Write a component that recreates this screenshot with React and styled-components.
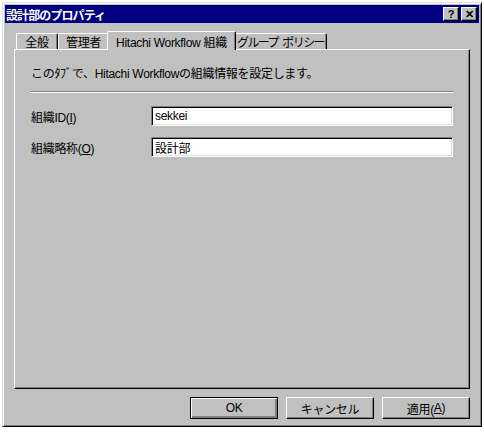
import React from 'react';
import styled, {createGlobalStyle} from 'styled-components';

const GlobalStyle = createGlobalStyle`
  html, body {
    margin: 0;
    padding: 0;
    background: #FFFFFF;
  }
  body {
    font-family: "Liberation Sans", "Noto Sans CJK JP", sans-serif;
    font-size: 12px;
    letter-spacing: -0.3px;
  }
`;

const Window = styled.div`
  box-sizing: border-box;
  margin: 2px 0 0 2px;
  width: 480px;
  height: 425px;
  background: #C0C0C0;
  border: 1px solid;
  border-color: #DFDFDF #000000 #000000 #DFDFDF;
  box-shadow: inset 1px 1px 0 #FFFFFF, inset -1px -1px 0 #808080;
  padding: 2px;
  display: flex;
  flex-direction: column;
`;

const TitleBar = styled.div`
  height: 18px;
  background: #000080;
  color: #FFFFFF;
  display: flex;
  align-items: center;
  justify-content: space-between;
  padding: 0 2px 0 1px;
  font-size: 12px;
  font-weight: bold;
  letter-spacing: -0.9px;
`;

const TitleButtons = styled.div`
  display: flex;
  gap: 2px;
`;

const CaptionBtn = styled.div`
  box-sizing: border-box;
  width: 16px;
  height: 14px;
  background: #C0C0C0;
  border: 1px solid;
  border-color: #FFFFFF #000000 #000000 #FFFFFF;
  box-shadow: inset -1px -1px 0 #808080;
  color: #000000;
  font-family: "Liberation Sans", sans-serif;
  font-size: 11px;
  font-weight: bold;
  letter-spacing: 0;
  line-height: 12px;
  text-align: center;
`;

const Body = styled.div`
  flex: 1;
  display: flex;
  flex-direction: column;
  padding: 8px 9px 5px 9px;
`;

const TabStrip = styled.div`
  display: flex;
  align-items: flex-end;
  height: 18px;
  padding-left: 2px;
  position: relative;
  z-index: 1;
`;

const Tab = styled.div`
  box-sizing: border-box;
  position: relative;
  z-index: ${p => p.active ? 2 : 1};
  width: ${p => p.w}px;
  height: ${p => p.active ? '19px' : '16px'};
  margin: ${p => p.active ? '0 -2px -1px -2px' : '0'};
  background: #C0C0C0;
  border-top: 1px solid #FFFFFF;
  border-left: 1px solid #FFFFFF;
  border-right: 1px solid #000000;
  box-shadow: inset -1px 0 0 #808080;
  border-radius: 2px 2px 0 0;
  display: flex;
  align-items: center;
  justify-content: center;
  white-space: pre;
  font-size: 12px;
  letter-spacing: ${p => p.ls || '-0.3px'};
  color: #000000;
`;

const Panel = styled.div`
  box-sizing: border-box;
  flex: 1;
  background: #C0C0C0;
  border: 1px solid;
  border-color: #FFFFFF #000000 #000000 #FFFFFF;
  box-shadow: inset -1px -1px 0 #808080;
  padding: 16px 16px 0 15px;
  display: flex;
  flex-direction: column;
`;

const Description = styled.div`
  height: 16px;
  line-height: 16px;
  font-size: 12px;
  padding-left: 1px;
`;

const Separator = styled.div`
  margin-top: 9px;
  height: 0;
  border-top: 1px solid #808080;
  border-bottom: 1px solid #FFFFFF;
`;

const FieldRow = styled.div`
  display: flex;
  align-items: center;
  height: 20px;
  margin-top: ${p => p.first ? '13px' : '11px'};
`;

const Label = styled.div`
  width: 120px;
  font-size: 12px;
  padding-left: 1px;
`;

const Input = styled.div`
  box-sizing: border-box;
  flex: 1;
  height: 20px;
  background: #FFFFFF;
  border: 1px solid;
  border-color: #808080 #FFFFFF #FFFFFF #808080;
  box-shadow: inset 1px 1px 0 #000000, inset -1px -1px 0 #DFDFDF;
  padding: 0 3px;
  display: flex;
  align-items: center;
  font-size: 12px;
`;

const ButtonRow = styled.div`
  display: flex;
  justify-content: flex-end;
  gap: 8px;
  margin-top: 8px;
`;

const Button = styled.div`
  box-sizing: border-box;
  width: 88px;
  height: 22px;
  background: #C0C0C0;
  border: 1px solid;
  border-color: ${p => p.def ? '#000000' : '#FFFFFF #000000 #000000 #FFFFFF'};
  box-shadow: ${p => p.def
    ? 'inset 1px 1px 0 #FFFFFF, inset -2px -2px 0 #808080'
    : 'inset -1px -1px 0 #808080'};
  display: flex;
  align-items: center;
  justify-content: center;
  font-size: 12px;
  color: #000000;
`;

const U = styled.span`
  text-decoration: underline;
`;

export default function App() {
    return (
        <>
            <GlobalStyle/>
            <Window>
                <TitleBar>
                    <span>設計部のプロパティ</span>
                    <TitleButtons>
                        <CaptionBtn>?</CaptionBtn>
                        <CaptionBtn>✕</CaptionBtn>
                    </TitleButtons>
                </TitleBar>
                <Body>
                    <TabStrip>
                        <Tab w={42}>全般</Tab>
                        <Tab w={51}>管理者</Tab>
                        <Tab w={129} active>Hitachi Workflow 組織</Tab>
                        <Tab w={93} ls="-1.6px">{'グループ\u2002ポリシー'}</Tab>
                    </TabStrip>
                    <Panel>
                        <Description>このﾀﾌﾞで、Hitachi Workflowの組織情報を設定します。</Description>
                        <Separator/>
                        <FieldRow first>
                            <Label>組織ID(<U>I</U>)</Label>
                            <Input>sekkei</Input>
                        </FieldRow>
                        <FieldRow>
                            <Label>組織略称(<U>O</U>)</Label>
                            <Input>設計部</Input>
                        </FieldRow>
                    </Panel>
                    <ButtonRow>
                        <Button def>OK</Button>
                        <Button>キャンセル</Button>
                        <Button>適用(<U>A</U>)</Button>
                    </ButtonRow>
                </Body>
            </Window>
        </>
    );
}
